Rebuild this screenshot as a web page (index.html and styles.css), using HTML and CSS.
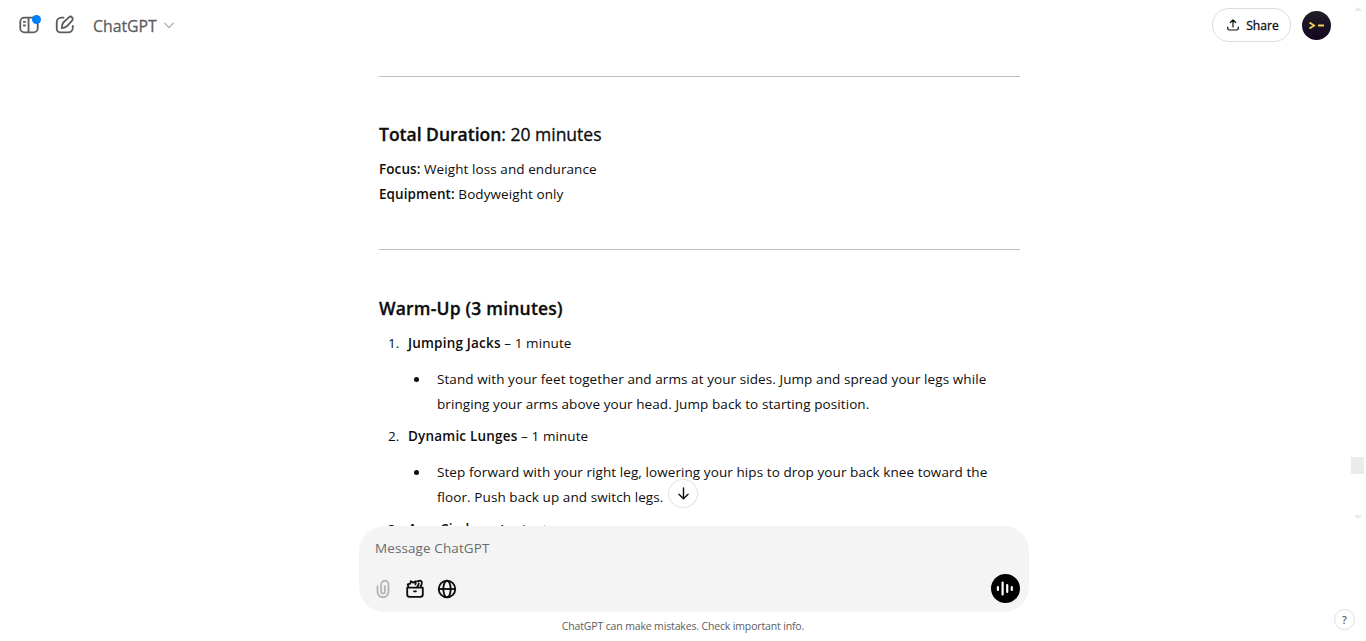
FILE: index.html
```html
<!DOCTYPE html>
<html lang="en">
<head>
    <meta charset="UTF-8">
    <title>ChatGPT</title>
    <link rel="stylesheet" href="styles.css">
</head>
<body>
    <header class="header">
        <button class="icon-btn sidebar-btn">
            <svg width="22" height="22" viewBox="0 0 24 24" fill="none" stroke="currentColor" stroke-width="2">
                <rect x="2.500" y="4" width="19" height="16" rx="4.500"/>
                <path d="M11.500 4v16M5.500 8.500h3M5.500 12.500h3"/>
            </svg>
            <span class="dot"></span>
        </button>
        <button class="icon-btn">
            <svg width="22" height="22" viewBox="0 0 24 24" fill="none" stroke="currentColor" stroke-width="2" stroke-linecap="round" stroke-linejoin="round">
                <path d="M10.500 4H8a5 5 0 0 0-5 5v7a4 4 0 0 0 4 4h8.500a5 5 0 0 0 5-5v-2"/>
                <path d="M8.500 15.500q0-4.500 2-6.500l5.700-5.300a2.400 2.400 0 0 1 3.500 3.500L14.500 13q-1.800 2.200-6 2.500z"/>
            </svg>
        </button>
        <button class="model">
            <span class="model-name">ChatGPT</span>
            <svg width="12" height="12" viewBox="0 0 12 12" fill="none" stroke="#b4b4b4" stroke-width="1.4"><path d="M1.500 3L6 7.500 10.500 3"/></svg>
        </button>
        <button class="share">
            <svg width="14" height="14" viewBox="0 0 14 14" fill="none" stroke="currentColor" stroke-width="1.2" stroke-linecap="round" stroke-linejoin="round">
                <path d="M7 9V2M4.300 4.500L7 1.800l2.700 2.700M1.700 9v1.300a1.700 1.700 0 0 0 1.700 1.700h7.200a1.700 1.700 0 0 0 1.700-1.700V9"/>
            </svg>
            <span>Share</span>
        </button>
        <div class="avatar">
            <svg width="29" height="29" viewBox="0 0 29 29" fill="none" stroke="#f5cf55" stroke-width="1.900"><path d="M7.500 11.500l4.500 3-4.500 3M16 14.500h6"/></svg>
        </div>
    </header>

    <main class="thread">
        <div class="message">
            <hr>
            <h3><strong>Total Duration</strong>: 20 minutes</h3>
            <p><strong>Focus:</strong> Weight loss and endurance<br><strong>Equipment:</strong> Bodyweight only</p>
            <hr>
            <h3 class="section"><strong>Warm-Up (3 minutes)</strong></h3>
            <ol>
                <li><strong>Jumping Jacks</strong> – 1 minute
                    <ul>
                        <li>Stand with your feet together and arms at your sides. Jump and spread your legs while bringing your arms above your head. Jump back to starting position.</li>
                    </ul>
                </li>
                <li><strong>Dynamic Lunges</strong> – 1 minute
                    <ul>
                        <li>Step forward with your right leg, lowering your hips to drop your back knee toward the floor. Push back up and switch legs.</li>
                    </ul>
                </li>
                <li><strong>Arm Circles</strong> – 1 minute</li>
            </ol>
        </div>
        <button class="scroll-down">
            <svg width="17" height="17" viewBox="0 0 18 18" fill="none" stroke="currentColor" stroke-width="1.500" stroke-linecap="round" stroke-linejoin="round"><path d="M9 3v11.500M4.200 9.800L9 14.500l4.800-4.700"/></svg>
        </button>
    </main>

    <form class="composer">
        <div class="placeholder">Message ChatGPT</div>
        <div class="tools">
            <svg class="clip" width="22" height="22" viewBox="0 0 24 24" fill="none" stroke="currentColor" stroke-width="2" stroke-linecap="round">
                <path d="M6 9v6a6 6 0 0 0 12 0V7a4 4 0 0 0-8 0v8a2 2 0 0 0 4 0V9"/>
            </svg>
            <svg width="22" height="22" viewBox="0 0 24 24" fill="none" stroke="currentColor" stroke-width="2" stroke-linecap="round" stroke-linejoin="round">
                <path d="M3.500 10.500h17V18a2.500 2.500 0 0 1-2.500 2.500H6A2.500 2.500 0 0 1 3.500 18zM11 14.500h2"/>
                <path d="M5 10L4 7l2.800-.8L7.500 3.500l2.700 1.500L13 3.500l-.5 3.500M15 3.500q4.500-1.500 4.500 1.500 0 2-1.500 5M14 10q2.200-1.800 2-4"/>
            </svg>
            <svg width="22" height="22" viewBox="0 0 24 24" fill="none" stroke="currentColor" stroke-width="2">
                <circle cx="12" cy="12" r="9"/><ellipse cx="12" cy="12" rx="4" ry="9"/><path d="M3 12h18"/>
            </svg>
            <button type="button" class="voice">
                <svg width="29" height="29" viewBox="0 0 29 29" fill="none" stroke="#fff" stroke-width="2.200" stroke-linecap="round"><path d="M6.900 13v3M11.600 8.500v12M16.200 11v7M20.800 13v3"/></svg>
            </button>
        </div>
    </form>

    <footer class="footer">ChatGPT can make mistakes. Check important info.</footer>

    <div class="scrollbar">
        <span class="arrow up"></span>
        <span class="thumb"></span>
        <span class="arrow down"></span>
    </div>
    <button class="help">?</button>
</body>
</html>
```
FILE: styles.css
```css
* {
    box-sizing: border-box;
}
body {
    margin: 0;
    height: 641px;
    display: flex;
    flex-direction: column;
    position: relative;
    overflow: hidden;
    background: white;
    color: #0d0d0d;
    font-family: "Open Sans", "Noto Sans", sans-serif;
    font-size: 13.5px;
}
button {
    font-family: inherit;
    color: inherit;
    background: none;
    border: none;
    padding: 0;
    display: flex;
    align-items: center;
    justify-content: center;
}
svg {
    display: block;
    flex: none;
}
strong {
    font-weight: 600;
}

.header {
    flex: none;
    height: 50px;
    padding: 0 35px 0 18px;
    display: flex;
    align-items: center;
    color: #5d5d5d;
}
.icon-btn {
    width: 22px;
    height: 22px;
    margin-right: 14px;
    position: relative;
}
.dot {
    position: absolute;
    top: 1px;
    right: -1px;
    width: 9px;
    height: 9px;
    border-radius: 50%;
    background: #0280fc;
}
.model {
    gap: 6px;
    margin-left: 3px;
    padding-top: 2px;
    font-size: 15.8px;
}
.model-name {
    -webkit-text-stroke: 0.3px;
}
.share {
    width: 79px;
    height: 34px;
    margin-left: auto;
    margin-right: 11px;
    padding-left: 2px;
    gap: 6px;
    border: 1px solid #dcdcdc;
    border-radius: 17px;
    color: #0d0d0d;
    font-size: 12.1px;
    -webkit-text-stroke: 0.3px;
}
.avatar {
    width: 29px;
    height: 29px;
    border-radius: 50%;
    background: linear-gradient(#202027, #130620);
}

.thread {
    flex: none;
    height: 476px;
    position: relative;
    overflow: hidden;
}
.message {
    width: 641px;
    margin-left: 379px;
    line-height: 25.2px;
    letter-spacing: 0.08px;
}
.message hr {
    height: 1px;
    margin: 26px 0 43px;
    border: none;
    background: #bdbdbd;
}
.message h3 {
    margin: 0 0 8px;
    font-size: 17.5px;
    font-weight: 400;
    line-height: 29px;
    letter-spacing: 0;
    -webkit-text-stroke: 0.3px;
}
.message .section {
    margin-top: 44px;
    letter-spacing: 0.2px;
}
.message p {
    margin: 0 0 42px;
}
.message ol {
    margin: 0;
    padding-left: 29px;
}
.message ol > li::marker {
    content: counter(list-item) ".\00a0\00a0\200a";
}
.message ol > li > strong {
    letter-spacing: 0.2px;
}
.message ul {
    margin: 10.6px 0 6.8px;
    padding-left: 22px;
    list-style: disc;
}
.message ul li {
    padding-left: 7px;
}
.scroll-down {
    position: absolute;
    left: 668px;
    top: 429px;
    width: 30px;
    height: 29px;
    border: 1px solid #e3e3e3;
    border-radius: 50%;
    background: white;
}

.composer {
    flex: none;
    width: 670px;
    height: 86px;
    margin-left: 359px;
    padding: 12px 9px 9px 16px;
    border-radius: 25px;
    background: #f4f4f4;
}
.placeholder {
    height: 21px;
    line-height: 21px;
    letter-spacing: 0.1px;
    color: #6b6b6b;
}
.tools {
    display: flex;
    align-items: center;
    gap: 10px;
    height: 29px;
    margin-top: 15px;
    margin-left: -3px;
}
.clip {
    color: #b4b4b4;
}
.voice {
    width: 29px;
    height: 29px;
    margin-left: auto;
    border-radius: 50%;
    background: black;
}
.footer {
    width: 1366px;
    line-height: 28px;
    text-align: center;
    font-size: 10.5px;
    letter-spacing: -0.15px;
    color: #5d5d5d;
}

.scrollbar {
    position: absolute;
    top: 0;
    right: 0;
    width: 15px;
    height: 526px;
    padding: 7px 0;
    display: flex;
    flex-direction: column;
    align-items: center;
}
.arrow {
    margin-right: 2px;
    border-left: 4px solid transparent;
    border-right: 4px solid transparent;
}
.up {
    border-bottom: 4px solid #e8e8e8;
}
.down {
    margin-top: auto;
    border-top: 4px solid #e8e8e8;
}
.thumb {
    width: 13px;
    height: 17px;
    margin-top: 446px;
    margin-right: 2px;
    background: #ebebeb;
}
.help {
    position: absolute;
    right: 11px;
    bottom: 11px;
    width: 21px;
    height: 21px;
    border: 1px solid #dedede;
    border-radius: 50%;
    color: #5d5d5d;
    font-size: 10.5px;
    font-weight: 600;
}
```
